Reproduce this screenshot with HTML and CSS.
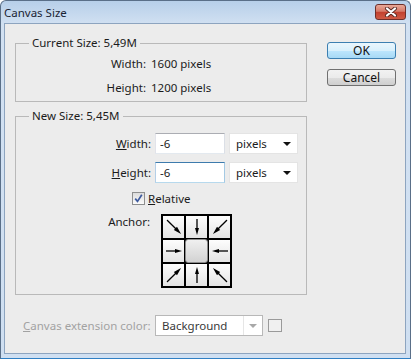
FILE: index.html
```html
<!DOCTYPE html>
<html lang="en">
<head>
    <meta charset="UTF-8">
    <title>Canvas Size</title>
    <link rel="stylesheet" href="styles.css">
</head>
<body>

<div class="window">
    <div class="titlebar">
        <span class="title">Canvas Size</span>
        <button class="close">
            <svg width="14" height="10" viewBox="0 0 14 10">
                <path d="M3 1.5 L11 8.5 M11 1.5 L3 8.5" stroke="#5a2a24" stroke-width="4" stroke-linecap="round"/>
                <path d="M3 1.5 L11 8.5 M11 1.5 L3 8.5" stroke="#fff" stroke-width="2.2" stroke-linecap="round"/>
            </svg>
        </button>
    </div>

    <div class="client">
        <div class="main">
            <div class="panel">
                <fieldset class="group current">
                    <legend>Current Size: 5,49M</legend>
                    <div class="info-grid">
                        <span class="lbl">Width:</span><span>1600 pixels</span>
                        <span class="lbl">Height:</span><span>1200 pixels</span>
                    </div>
                </fieldset>

                <fieldset class="group new">
                    <legend>New Size: 5,45M</legend>
                    <div class="form-grid">
                        <label class="lbl"><u>W</u>idth:</label>
                        <input type="text" class="field" value="-6">
                        <div class="select">pixels<span class="caret"></span></div>

                        <label class="lbl"><u>H</u>eight:</label>
                        <input type="text" class="field focused" value="-6">
                        <div class="select">pixels<span class="caret"></span></div>
                    </div>

                    <div class="relative-row">
                        <span class="check">
                            <svg width="11" height="11" viewBox="0 0 11 11">
                                <path d="M2.2 5.6 L4.5 8.4 L8.8 1.8" fill="none" stroke="#3d5a9e" stroke-width="1.7"/>
                            </svg>
                        </span>
                        <span><u>R</u>elative</span>
                    </div>

                    <div class="anchor-row">
                        <span class="lbl">Anchor:</span>
                        <div class="anchor-grid">
                            <div class="cell"><svg class="arrow r45" viewBox="0 0 20 20"><use href="#arr-diag"/></svg></div>
                            <div class="cell"><svg class="arrow r90" viewBox="0 0 20 20"><use href="#arr"/></svg></div>
                            <div class="cell"><svg class="arrow r135" viewBox="0 0 20 20"><use href="#arr-diag"/></svg></div>
                            <div class="cell"><svg class="arrow" viewBox="0 0 20 20"><use href="#arr"/></svg></div>
                            <div class="cell center"></div>
                            <div class="cell"><svg class="arrow r180" viewBox="0 0 20 20"><use href="#arr"/></svg></div>
                            <div class="cell"><svg class="arrow r315" viewBox="0 0 20 20"><use href="#arr-diag"/></svg></div>
                            <div class="cell"><svg class="arrow r270" viewBox="0 0 20 20"><use href="#arr"/></svg></div>
                            <div class="cell"><svg class="arrow r225" viewBox="0 0 20 20"><use href="#arr-diag"/></svg></div>
                        </div>
                    </div>
                </fieldset>
            </div>

            <div class="actions">
                <button class="btn default">OK</button>
                <button class="btn">Cancel</button>
            </div>
        </div>

        <div class="extension-row">
            <span class="muted"><u>C</u>anvas extension color:</span>
            <div class="select wide">Background<span class="sep"></span><span class="caret light"></span></div>
            <span class="swatch"></span>
        </div>
    </div>
</div>

<svg width="0" height="0" style="position:absolute">
    <defs>
        <g id="arr">
            <path d="M2 10 L13 10" stroke="#000" stroke-width="1.3"/>
            <path d="M11 8 L18 10 L11 12 Z" fill="#000"/>
        </g>
        <g id="arr-diag">
            <path d="M0 10 L14 10" stroke="#000" stroke-width="1.3"/>
            <path d="M12 7.8 L20 10 L12 12.2 Z" fill="#000"/>
        </g>
    </defs>
</svg>

</body>
</html>
```

FILE: styles.css
```css
* {
    box-sizing: border-box;
    margin: 0;
    padding: 0;
}

body {
    font-family: "Noto Sans", "Open Sans", sans-serif;
    font-size: 11.5px;
    color: #1b1b1b;
    background: #fff;
}

.window {
    width: 411px;
    height: 359px;
    display: flex;
    flex-direction: column;
    padding: 0 4px 4px 3px;
    border: 1px solid #5a6f88;
    border-bottom-color: #2f7fc4;
    border-radius: 6px 6px 0 0;
    background: linear-gradient(to bottom, #b7cfe9 0, #d2e1f2 24px, #cfdff1 100%);
}

.titlebar {
    height: 22px;
    display: flex;
    align-items: flex-start;
    justify-content: space-between;
}

.title {
    margin-top: 4px;
    font-size: 11.5px;
    line-height: 16px;
    color: #1a2433;
}

.close {
    width: 31px;
    height: 16px;
    margin-top: 3px;
    display: flex;
    align-items: center;
    justify-content: center;
    border: 1px solid #6d2f2a;
    border-radius: 3px;
    background: linear-gradient(to bottom, #e9a898 0, #d67a68 45%, #c2412f 52%, #cf5a44 100%);
}

.client {
    flex: 1;
    padding: 11px 0 0 10px;
    border: 1px solid #8da4bf;
    background: #ececec;
}

.main {
    display: flex;
    gap: 20px;
}

.panel {
    width: 292px;
    display: flex;
    flex-direction: column;
    gap: 6px;
}

.group {
    border: 1px solid #b9b9b9;
    min-width: 0;
}

.group legend {
    margin-left: 13px;
    padding: 0 3px;
    line-height: 16px;
}

.lbl {
    text-align: right;
}

.info-grid {
    display: grid;
    grid-template-columns: 130px auto;
    grid-auto-rows: 24px;
    column-gap: 5px;
    align-items: center;
    padding-bottom: 2px;
}

.form-grid {
    display: grid;
    grid-template-columns: 135px 70px 69px;
    grid-auto-rows: 21px;
    column-gap: 4px;
    row-gap: 8px;
    align-items: center;
    margin-top: 9px;
}

.field {
    width: 100%;
    height: 21px;
    padding: 0 4px;
    font: inherit;
    color: #1b1b1b;
    background: #fff;
    border: 1px solid;
    border-color: #abadb3 #dbdfe6 #e3e9ef #e2e3ea;
    outline: none;
}

.field.focused {
    border-color: #3d7bad #a4c9e3 #b7d9ed #b5cfe7;
}

.select {
    height: 21px;
    display: flex;
    align-items: center;
    justify-content: space-between;
    padding: 0 4px 0 6px;
    background: #fff;
    border: 1px solid #e4e4e4;
}

.caret {
    width: 0;
    height: 0;
    margin-right: 2px;
    border-left: 4px solid transparent;
    border-right: 4px solid transparent;
    border-top: 4px solid #111;
}

.caret.light {
    border-top-color: #a8a8a8;
    margin-right: 1px;
}

.relative-row {
    display: flex;
    align-items: center;
    gap: 3px;
    height: 13px;
    margin-top: 9px;
    padding-left: 116px;
}

.check {
    width: 13px;
    height: 13px;
    display: flex;
    align-items: center;
    justify-content: center;
    border: 1px solid #8e8f8f;
    background: linear-gradient(to bottom, #dcdcdc, #fbfbfb);
}

.anchor-row {
    display: flex;
    align-items: flex-start;
    gap: 11px;
    margin-top: 9px;
    padding-bottom: 6px;
}

.anchor-row .lbl {
    width: 134px;
    line-height: 16px;
}

.anchor-grid {
    display: grid;
    grid-template-columns: repeat(3, 21px);
    grid-template-rows: repeat(3, 22px);
    gap: 2px;
    padding: 2px;
    background: #000;
}

.cell {
    display: flex;
    align-items: center;
    justify-content: center;
    background: linear-gradient(to bottom, #fdfdfd, #e4e4e4);
}

.cell.center {
    margin: -1px;
    border: 1px solid #8a8a8a;
    border-radius: 3px;
    background: linear-gradient(to bottom, #f0f0f0, #d2d2d2);
}

.arrow {
    width: 20px;
    height: 20px;
}

.r45 { transform: rotate(45deg); }
.r90 { transform: rotate(90deg); }
.r135 { transform: rotate(135deg); }
.r180 { transform: rotate(180deg); }
.r225 { transform: rotate(225deg); }
.r270 { transform: rotate(270deg); }
.r315 { transform: rotate(315deg); }

.actions {
    width: 69px;
    display: flex;
    flex-direction: column;
    gap: 10px;
    padding-top: 7px;
}

.btn {
    height: 17px;
    font: inherit;
    font-size: 12px;
    line-height: 14px;
    color: #111;
    border: 1px solid #707070;
    border-radius: 3px;
    background: linear-gradient(to bottom, #f2f2f2 0, #ebebeb 50%, #dddddd 51%, #cfcfcf 100%);
}

.btn.default {
    border-color: #3c7fb1;
    background: linear-gradient(to bottom, #eaf6fd 0, #d9f0fc 50%, #bee6fd 51%, #a7d9f5 100%);
}

.extension-row {
    display: flex;
    align-items: center;
    margin-top: 20px;
    padding-left: 8px;
}

.muted {
    width: 132px;
    color: #a2a2a2;
}

.select.wide {
    width: 108px;
    padding-left: 6px;
    border-color: #b8b8b8;
    color: #3a3a3a;
}

.sep {
    margin-left: auto;
    margin-right: 5px;
    width: 1px;
    height: 19px;
    background: #e6e6e6;
}

.swatch {
    width: 14px;
    height: 13px;
    margin-left: 5px;
    border: 1px solid #9a9a9a;
    background: #f0f0f0;
}
```
